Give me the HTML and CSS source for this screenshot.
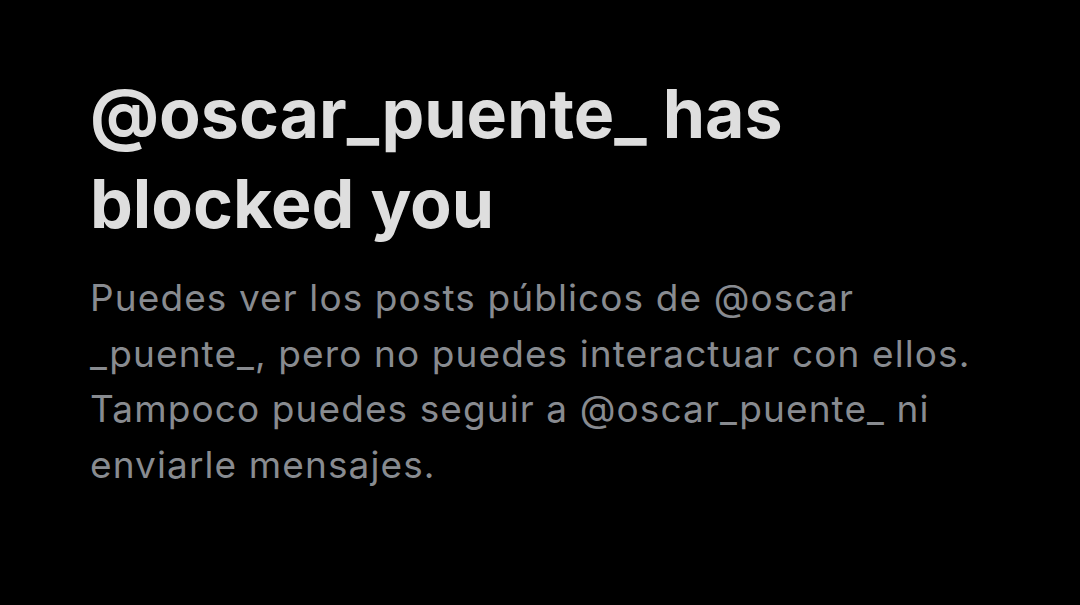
FILE: index.html
```html
<!DOCTYPE html>
<html>
<head>
<link rel="stylesheet" href="styles.css">
</head>
<body>
<div class="blocked">
<h1 class="title">@oscar_puente_ has<br>blocked you</h1>
<p class="info">Puedes ver los posts públicos de @oscar<br>_puente_, pero no puedes interactuar con ellos.<br>Tampoco puedes seguir a @oscar_puente_ ni<br>enviarle mensajes.</p>
</div>
</body>
</html>
```

FILE: styles.css
```css
html, body {
margin: 0;
height: 100%;
background: #000;
}
.blocked {
padding: 68px 0 0 90px;
font-family: Inter, Roboto, "Liberation Sans", sans-serif;
}
.title {
margin: 0;
color: #dedede;
font-size: 68px;
font-weight: 700;
line-height: 90px;
white-space: nowrap;
}
.info {
margin: 22px 0 0 0;
color: #888b90;
font-size: 37px;
line-height: 55.5px;
letter-spacing: 1.1px;
white-space: nowrap;
}
```
